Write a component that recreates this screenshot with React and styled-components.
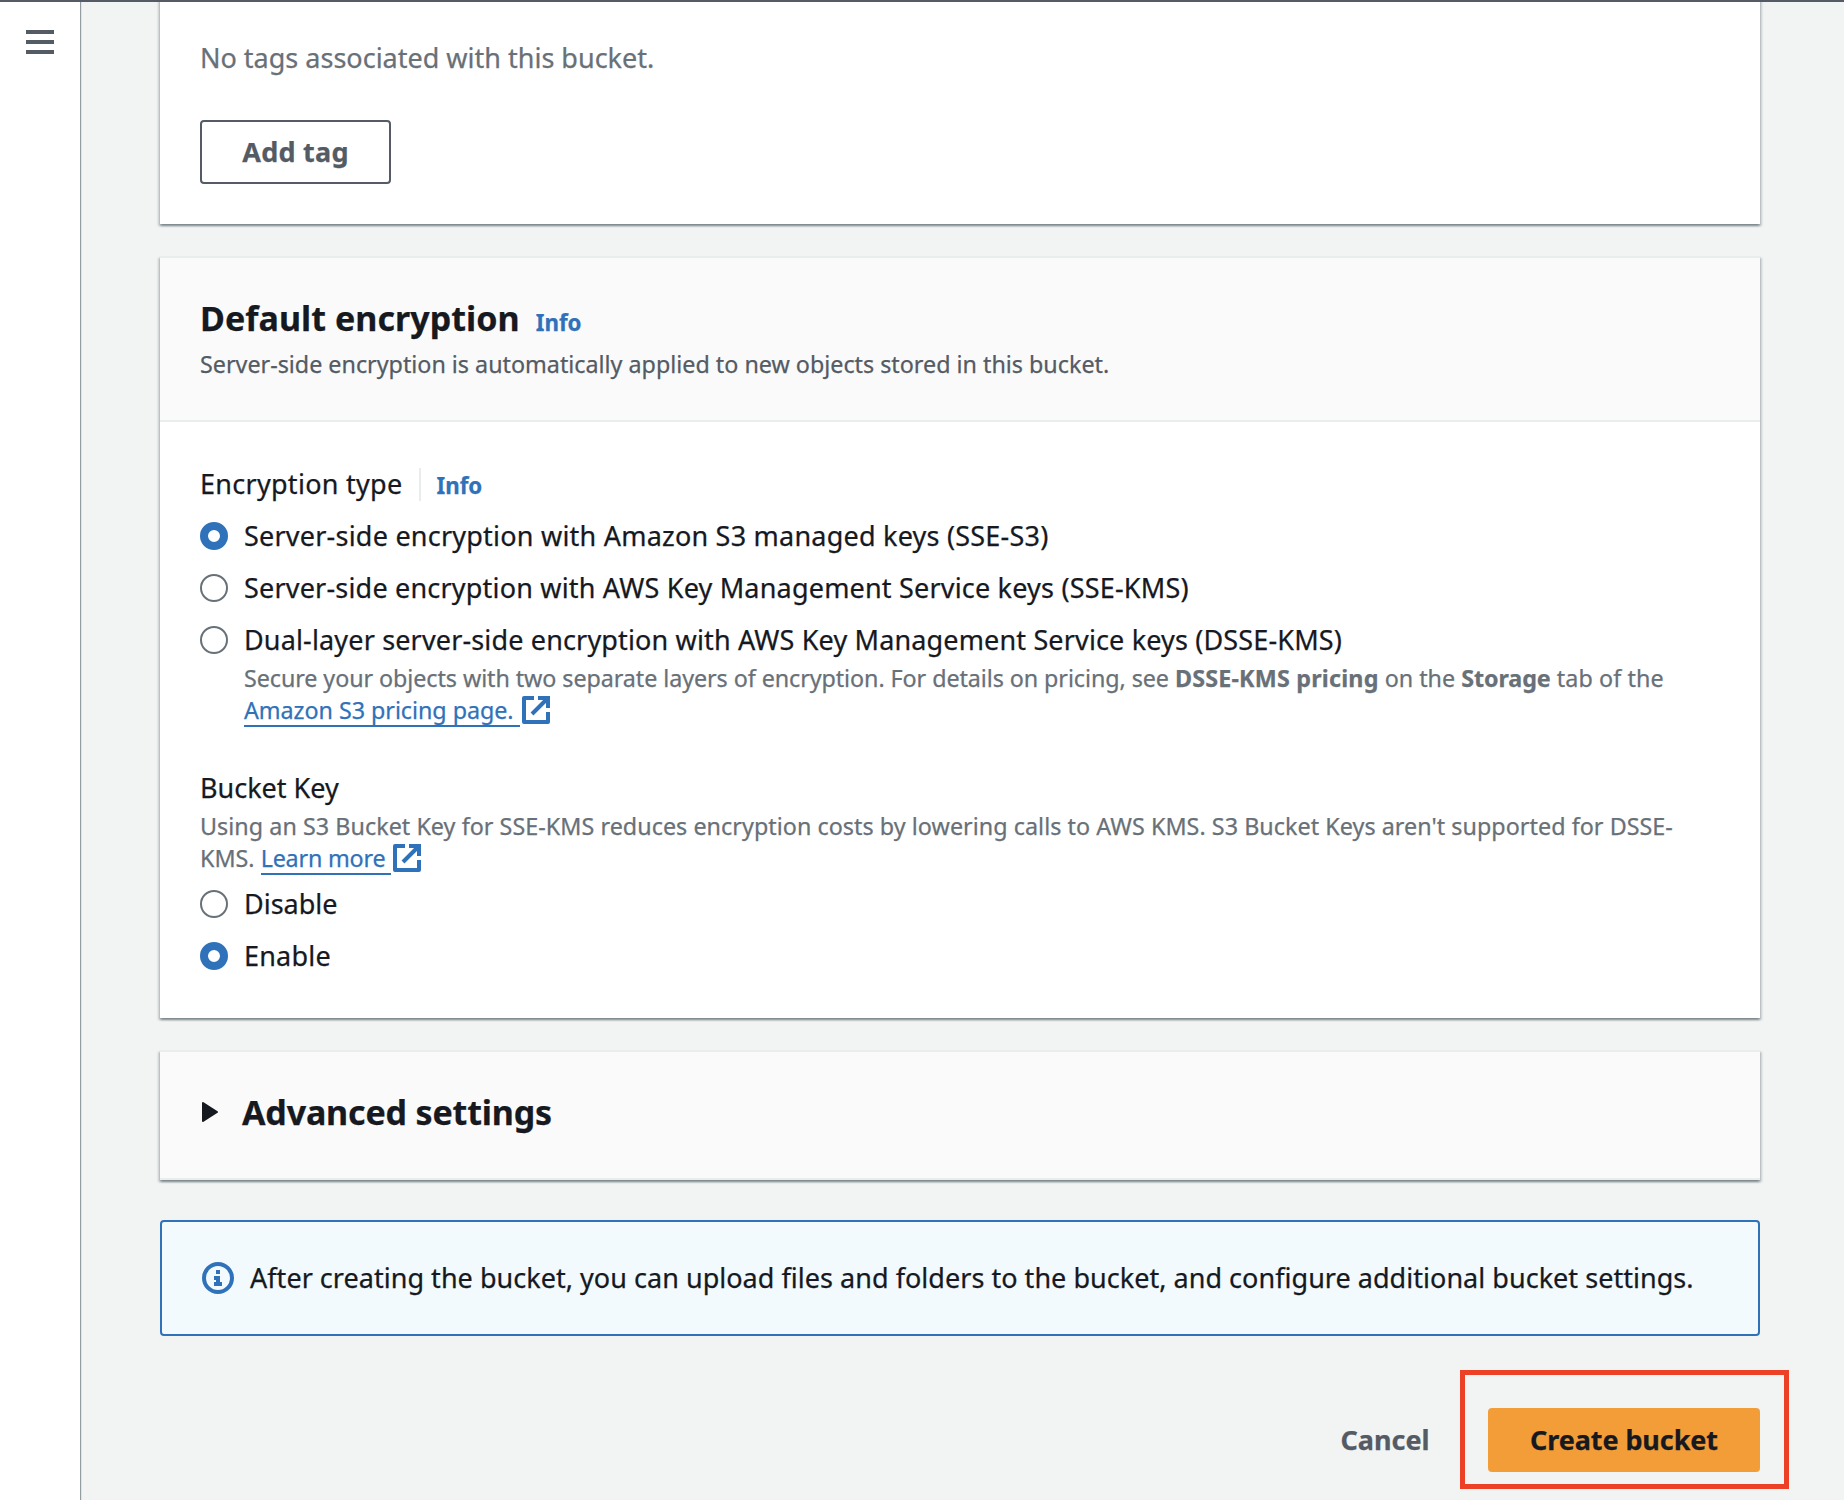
import React from 'react';
import styled, { createGlobalStyle, css } from 'styled-components';

const GlobalStyle = createGlobalStyle`
  *, *::before, *::after { box-sizing: border-box; }
  body {
    margin: 0;
    background: #f2f3f3;
    color: #16191f;
    font-family: "Noto Sans", "Open Sans", sans-serif;
    font-size: 27px;
    line-height: 44px;
    -webkit-text-stroke: 0.25px currentColor;
    overflow: hidden;
  }
`;

const Page = styled.div`
  display: flex;
  height: 1500px;
  border-top: 2px solid #545b64;
  overflow: hidden;
`;

const Sidebar = styled.nav`
  flex: none;
  width: 80px;
  padding: 28px 26px;
  background: #fff;
  box-shadow: 1px 0 1px 0 rgba(0, 28, 36, 0.4);
`;

const MenuButton = styled.button`
  display: flex;
  flex-direction: column;
  gap: 6px;
  width: 28px;
  padding: 0;
  border: 0;
  background: none;
`;

const MenuBar = styled.span`
  height: 4px;
  background: #545b64;
`;

const Content = styled.main`
  flex: none;
  width: 1680px;
  margin-top: -8px;
  padding-left: 80px;
`;

const Card = styled.section`
  display: flow-root;
  margin-bottom: ${(p) => p.$gap || 32}px;
  background: #fff;
  box-shadow: 0 2px 2px 0 rgba(0, 28, 36, 0.3), 2px 2px 2px 0 rgba(0, 28, 36, 0.15),
    -2px 2px 2px 0 rgba(0, 28, 36, 0.15);
`;

const CardHeader = styled.header`
  padding: 38px 40px ${(p) => p.$bottom || 40}px;
  border-top: 2px solid #eaeded;
  border-bottom: 2px solid #eaeded;
  background: #fafafa;
`;

const CardBody = styled.div`
  padding: ${(p) => p.$top || 40}px 40px 40px;
`;

const Text = styled.span`
  letter-spacing: ${(p) => p.$track || 0}px;
  white-space: pre;
`;

const HeadingRow = styled.div`
  display: flex;
  align-items: baseline;
  gap: 16px;
  height: 44px;
`;

const Heading = styled.h2`
  margin: 0;
  font-size: 34px;
  font-weight: 700;
  letter-spacing: ${(p) => p.$track || 0}px;
`;

const InfoLink = styled.a`
  color: #2f72b9;
  font-size: 22.3px;
  font-weight: 700;
`;

const HeaderNote = styled.p`
  margin: 8px 0 0;
  color: #545b64;
  font-size: 23.3px;
  line-height: 32px;
`;

const EmptyNote = styled.p`
  margin: 0 0 40px;
  color: #687078;
`;

const LabelRow = styled.div`
  display: flex;
  align-items: baseline;
  height: 44px;
  margin-top: ${(p) => p.$top || 0}px;
`;

const Divider = styled.span`
  align-self: center;
  width: 2px;
  height: 33px;
  margin: 0 16px;
  background: #eaeded;
`;

const Hint = styled.p`
  margin: 0 0 0 ${(p) => p.$indent || 0}px;
  color: #687078;
  font-size: 23.3px;
  line-height: 32px;
  white-space: nowrap;
`;

const HintLine = styled.span`
  display: flex;
  height: 32px;
`;

const ExternalLink = styled.a`
  display: flex;
  color: #2f72b9;
`;

const LinkText = styled.span`
  width: ${(p) => p.$width}px;
  height: 33px;
  margin-right: 2px;
  border-bottom: 2px solid #2f72b9;
  letter-spacing: ${(p) => p.$track || 0}px;
`;

const LinkIcon = styled.svg`
  width: 28px;
  height: 28px;
  margin-top: 2px;
`;

const Option = styled.label`
  display: flex;
  align-items: center;
  gap: 16px;
  height: 44px;
  margin-top: 8px;
`;

const Radio = styled.span`
  flex: none;
  width: 28px;
  height: 28px;
  border-radius: 50%;
  background: #fff;
  ${(p) =>
    p.$checked
      ? css`border: 8px solid #2f72b9;`
      : css`border: 2px solid #687078;`}
`;

const Button = styled.button`
  display: flex;
  align-items: center;
  justify-content: center;
  width: ${(p) => p.$width}px;
  height: 64px;
  padding: 0;
  border: 2px solid transparent;
  border-radius: 4px;
  background: transparent;
  color: #545b64;
  font: inherit;
  font-weight: 700;
  ${(p) => p.$kind === 'outline' && css`border-color: #545b64; background: #fff;`}
  ${(p) => p.$kind === 'primary' && css`border-color: #f29d38; background: #f29d38; color: #16191f;`}
`;

const ExpandRow = styled.div`
  display: flex;
  align-items: center;
`;

const Caret = styled.svg`
  width: 16px;
  height: 20px;
  margin: 0 24px 0 2px;
`;

const Alert = styled.div`
  display: flex;
  align-items: center;
  gap: 16px;
  height: 116px;
  padding: 0 38px 0 40px;
  border: 2px solid #2f72b9;
  border-radius: 4px;
  background: #f2fafd;
`;

const AlertIcon = styled.svg`
  flex: none;
  width: 32px;
  height: 32px;
`;

const Actions = styled.footer`
  display: flex;
  justify-content: flex-end;
  gap: 16px;
  margin-top: 72px;
`;

const Highlighted = styled.div`
  position: relative;
  &::after {
    content: "";
    position: absolute;
    top: -38px;
    left: -28px;
    width: 329px;
    height: 119px;
    border: 5px solid #ec4126;
    pointer-events: none;
  }
`;

const External = () => (
  <LinkIcon viewBox="0 0 28 28" fill="none" stroke="#2f72b9" strokeWidth="4">
    <path d="M12 2H2V26H26V16" strokeLinejoin="round" />
    <path d="M16 2H26V12M26 2L10 18" />
  </LinkIcon>
);

const encryptionTypes = [
  { label: 'Server-side encryption with Amazon S3 managed keys (SSE-S3)', track: 0.22, checked: true },
  { label: 'Server-side encryption with AWS Key Management Service keys (SSE-KMS)', track: 0.19 },
  { label: 'Dual-layer server-side encryption with AWS Key Management Service keys (DSSE-KMS)', track: 0.15 },
];

const bucketKeyOptions = [
  { label: 'Disable' },
  { label: 'Enable', track: 0.2, checked: true },
];

const Options = ({ items }) =>
  items.map((o) => (
    <Option key={o.label}>
      <Radio $checked={o.checked} />
      <Text $track={o.track}>{o.label}</Text>
    </Option>
  ));

export default function App() {
  return (
    <>
      <GlobalStyle />
      <Page>
        <Sidebar>
          <MenuButton aria-label="Open navigation">
            <MenuBar />
            <MenuBar />
            <MenuBar />
          </MenuButton>
        </Sidebar>
        <Content>
          <Card>
            <CardBody $top={42}>
              <EmptyNote>No tags associated with this bucket.</EmptyNote>
              <Button $kind="outline" $width={191}>
                <Text $track={0.25}>Add tag</Text>
              </Button>
            </CardBody>
          </Card>

          <Card>
            <CardHeader>
              <HeadingRow>
                <Heading $track={0.05}>Default encryption</Heading>
                <InfoLink>Info</InfoLink>
              </HeadingRow>
              <HeaderNote>
                Server-side encryption is automatically applied to new objects stored in this bucket.
              </HeaderNote>
            </CardHeader>
            <CardBody>
              <LabelRow>
                <Text $track={0.28}>Encryption type</Text>
                <Divider />
                <InfoLink>Info</InfoLink>
              </LabelRow>
              <Options items={encryptionTypes} />
              <Hint $indent={44}>
                <HintLine>
                  <Text $track={-0.07}>Secure your objects with two separate layers of encryption. For details on pricing, see </Text>
                  <Text as="b" $track={0.2}>DSSE-KMS pricing</Text>
                  <Text> on the </Text>
                  <Text as="b" $track={-0.1}>Storage</Text>
                  <Text $track={0.1}> tab of the</Text>
                </HintLine>
                <HintLine>
                  <ExternalLink>
                    <LinkText $width={276} $track={-0.04}>Amazon S3 pricing page.</LinkText>
                    <External />
                  </ExternalLink>
                </HintLine>
              </Hint>
              <LabelRow $top={40}>
                <Text>Bucket Key</Text>
              </LabelRow>
              <Hint>
                <HintLine>
                  <Text $track={0.05}>Using an S3 Bucket Key for SSE-KMS reduces encryption costs by lowering calls to AWS KMS. S3 Bucket Keys aren't supported for DSSE-</Text>
                </HintLine>
                <HintLine>
                  <Text>KMS. </Text>
                  <ExternalLink>
                    <LinkText $width={130} $track={-0.2}>Learn more</LinkText>
                    <External />
                  </ExternalLink>
                </HintLine>
              </Hint>
              <Options items={bucketKeyOptions} />
            </CardBody>
          </Card>

          <Card $gap={40}>
            <CardHeader $bottom={44}>
              <ExpandRow>
                <Caret viewBox="0 0 16 20">
                  <path d="M1 1L15 10L1 19Z" fill="#16191f" stroke="#16191f" strokeWidth="2" strokeLinejoin="round" />
                </Caret>
                <Heading $track={-0.17}>Advanced settings</Heading>
              </ExpandRow>
            </CardHeader>
          </Card>

          <Alert>
            <AlertIcon viewBox="0 0 32 32" fill="none" stroke="#2f72b9" strokeWidth="4">
              <circle cx="16" cy="16" r="14" />
              <path d="M14 10H18M12 16H16V22M12 22H20" />
            </AlertIcon>
            <Text $track={0.03}>After creating the bucket, you can upload files and folders to the bucket, and configure additional bucket settings.</Text>
          </Alert>

          <Actions>
            <Button $width={174}>
              <Text>Cancel</Text>
            </Button>
            <Highlighted>
              <Button $kind="primary" $width={272}>
                <Text $track={-0.1}>Create bucket</Text>
              </Button>
            </Highlighted>
          </Actions>
        </Content>
      </Page>
    </>
  );
}
